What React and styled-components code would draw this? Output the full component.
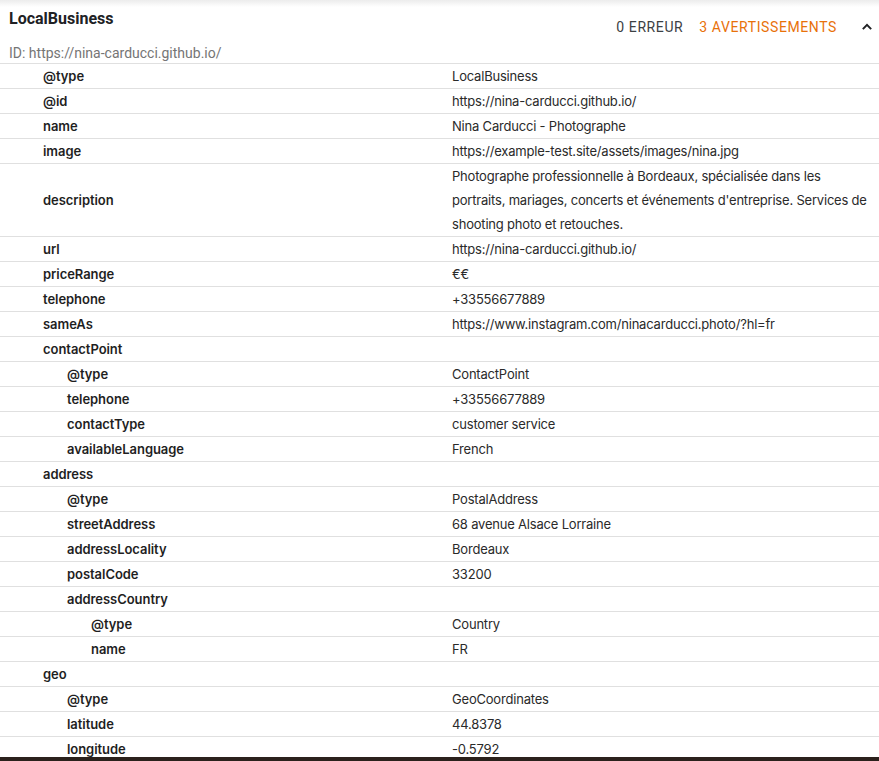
import React from "react";
import styled, { createGlobalStyle } from "styled-components";

const GlobalStyle = createGlobalStyle`
  html, body {
    margin: 0;
    padding: 0;
    background: #ffffff;
  }
  body {
    font-family: "Roboto", "Liberation Sans", sans-serif;
    color: #202124;
  }
`;

const Page = styled.div`
  width: 879px;
  height: 761px;
  overflow: hidden;
  display: flex;
  flex-direction: column;
  background: linear-gradient(to bottom, #ececec 0px, #ffffff 7px);
`;

const Header = styled.header`
  display: flex;
  justify-content: space-between;
  align-items: flex-start;
  flex-shrink: 0;
  height: 63px;
  box-sizing: border-box;
  padding: 9px 0 0 9px;
`;

const TitleBlock = styled.div`
  display: flex;
  flex-direction: column;
`;

const Title = styled.h1`
  margin: 0;
  font-size: 16px;
  font-weight: 700;
  line-height: 20px;
  color: #202124;
`;

const SubId = styled.div`
  margin-top: 14px;
  font-size: 14px;
  line-height: 20px;
  color: #757575;
`;

const Status = styled.div`
  display: flex;
  align-items: center;
  margin-top: 8px;
  padding-right: 2px;
  font-size: 14px;
  letter-spacing: 0.6px;
`;

const Count = styled.span`
  color: ${(p) => (p.$warn ? "#e8710a" : "#3c4043")};
  margin-right: ${(p) => (p.$warn ? "20px" : "16px")};
`;

const Chevron = styled.svg`
  width: 20px;
  height: 20px;
  display: block;
`;

const Table = styled.div`
  border-top: 1px solid #e0e0e0;
  flex: 1;
  min-height: 0;
  overflow: hidden;
`;

const Row = styled.div`
  display: grid;
  grid-template-columns: 452px 1fr;
  border-bottom: 1px solid #e0e0e0;
  font-family: "Inter", "Roboto", sans-serif;
  font-size: 13px;
  line-height: 24px;
  color: #1f1f1f;
`;

const Key = styled.div`
  display: flex;
  align-items: center;
  padding-left: ${(p) => 43 + (p.$depth - 1) * 24}px;
  font-weight: 600;
  letter-spacing: -0.05px;
`;

const Value = styled.div`
  padding-right: 2px;
  font-weight: 400;
  letter-spacing: -0.2px;
  color: #2a2a2a;
`;

const Footer = styled.div`
  height: 4px;
  background: #2b211c;
  flex-shrink: 0;
`;

const rows = [
  ["@type", "LocalBusiness", 1],
  ["@id", "https://nina-carducci.github.io/", 1],
  ["name", "Nina Carducci - Photographe", 1],
  ["image", "https://example-test.site/assets/images/nina.jpg", 1],
  [
    "description",
    "Photographe professionnelle à Bordeaux, spécialisée dans les portraits, mariages, concerts et événements d'entreprise. Services de shooting photo et retouches.",
    1,
  ],
  ["url", "https://nina-carducci.github.io/", 1],
  ["priceRange", "€€", 1],
  ["telephone", "+33556677889", 1],
  ["sameAs", "https://www.instagram.com/ninacarducci.photo/?hl=fr", 1],
  ["contactPoint", "", 1],
  ["@type", "ContactPoint", 2],
  ["telephone", "+33556677889", 2],
  ["contactType", "customer service", 2],
  ["availableLanguage", "French", 2],
  ["address", "", 1],
  ["@type", "PostalAddress", 2],
  ["streetAddress", "68 avenue Alsace Lorraine", 2],
  ["addressLocality", "Bordeaux", 2],
  ["postalCode", "33200", 2],
  ["addressCountry", "", 2],
  ["@type", "Country", 3],
  ["name", "FR", 3],
  ["geo", "", 1],
  ["@type", "GeoCoordinates", 2],
  ["latitude", "44.8378", 2],
  ["longitude", "-0.5792", 2],
];

const App = () => {
  return (
    <Page>
      <GlobalStyle />
      <Header>
        <TitleBlock>
          <Title>LocalBusiness</Title>
          <SubId>ID: https://nina-carducci.github.io/</SubId>
        </TitleBlock>
        <Status>
          <Count>0 ERREUR</Count>
          <Count $warn>3 AVERTISSEMENTS</Count>
          <Chevron viewBox="0 0 24 24">
            <path
              d="M7 14.5l5-5 5 5"
              fill="none"
              stroke="#202124"
              strokeWidth="2.4"
            />
          </Chevron>
        </Status>
      </Header>
      <Table>
        {rows.map(([k, v, depth], i) => (
          <Row key={i}>
            <Key $depth={depth}>{k}</Key>
            <Value>{v}</Value>
          </Row>
        ))}
      </Table>
      <Footer />
    </Page>
  );
};

export default App;
